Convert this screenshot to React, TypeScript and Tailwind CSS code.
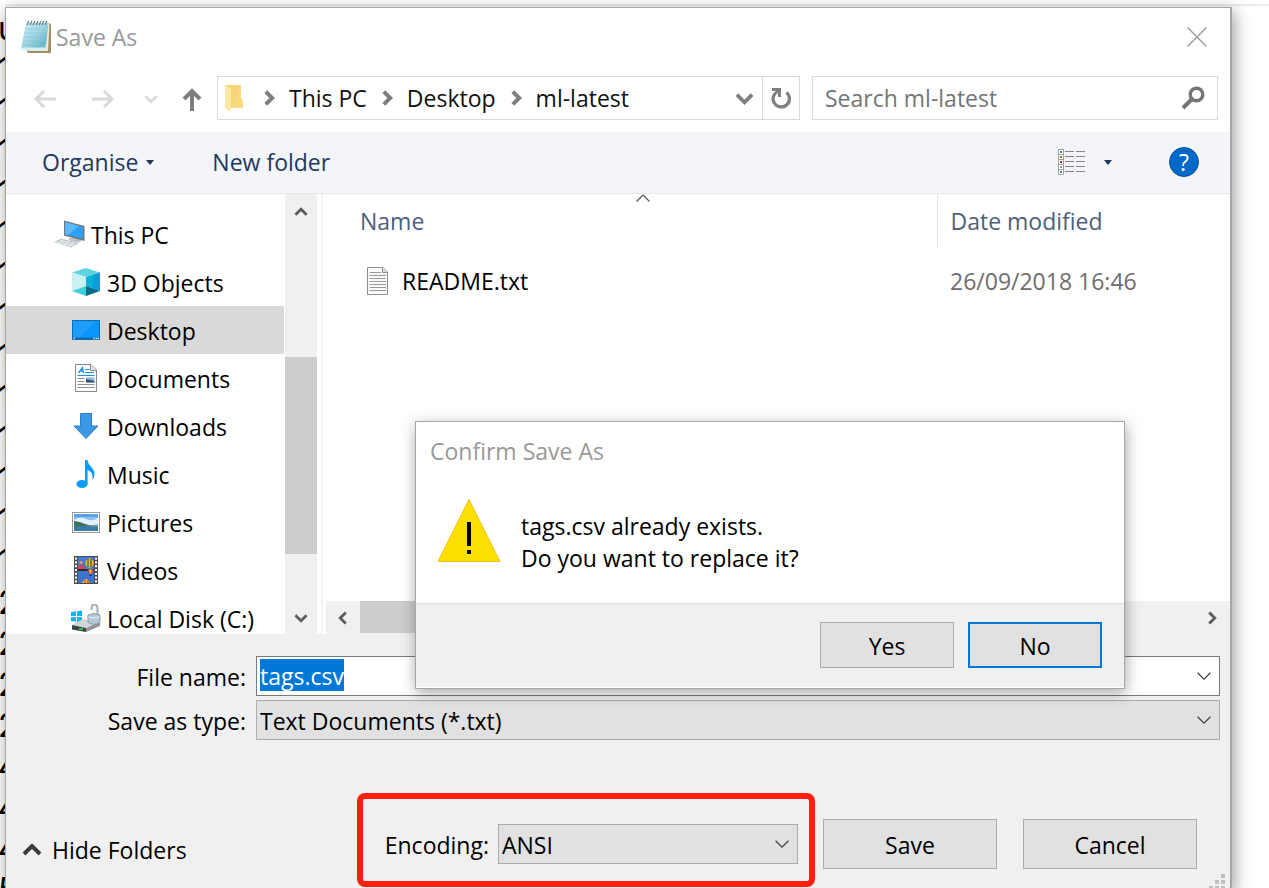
import type { ReactNode } from 'react';

const BEHIND = ['u', '1', '1', '1', '1', '1', '1', '1', '1', '1', '1', '1', '1', '1', '2', '2', '2', '2', '4', '4', '4', '5'];

type ChevronProps = { dir: 'up' | 'down' | 'left' | 'right'; className: string; stroke?: number };

function Chevron({ dir, className, stroke = 2 }: ChevronProps) {
  const paths = {
    up: 'M2 14 L10 6 L18 14',
    down: 'M2 6 L10 14 L18 6',
    left: 'M14 2 L6 10 L14 18',
    right: 'M6 2 L14 10 L6 18',
  };
  return (
    <svg viewBox="0 0 20 20" className={className} fill="none" stroke="currentColor" strokeWidth={stroke} aria-hidden="true">
      <path d={paths[dir]} />
    </svg>
  );
}

function NotepadIcon() {
  return (
    <svg viewBox="0 0 32 34" className="h-[34px] w-8 shrink-0" aria-hidden="true">
      <defs>
        <linearGradient id="pad" x1="0" y1="0" x2="1" y2="1">
          <stop offset="0" stopColor="#c9edf3" />
          <stop offset="0.45" stopColor="#a3d9e5" />
          <stop offset="0.8" stopColor="#68b6ca" />
          <stop offset="1" stopColor="#b9e4ec" />
        </linearGradient>
      </defs>
      <path d="M7 31 L8 33 H31 V4 L28 3 Z" fill="#a08f66" />
      <path d="M8 31 H28 L29.5 4 L27 3 Z" fill="#f2ead4" />
      <path d="M6 3 H28.5 L25.5 30 H0.5 Z" fill="url(#pad)" />
      <path d="M0.5 30 L1 27.5 H25.8 L25.5 30 Z" fill="#d5f1f5" />
      <path d="M5.5 9 H25 M5 13 H24.5 M4.3 17 H24 M3.5 21 H23.5 M3 25 H23" stroke="#8ac6d4" strokeWidth="0.7" />
      <path d="M7 5 L9 1 M10 5 L12 1 M13 5 L15 1 M16 5 L18 1 M19 5 L21 1 M22 5 L24 1 M25 5 L27 1" stroke="#6d7f86" strokeWidth="1.3" />
    </svg>
  );
}

function FolderIcon() {
  return (
    <svg viewBox="0 0 20 28" className="h-7 w-5 shrink-0" aria-hidden="true">
      <path d="M0 1 H16 V14 L18 17 V24 H5 Z" fill="#f5d576" />
      <path d="M8 24 L16 1 V14 L18 17 V24 Z" fill="#f9da7e" />
      <path d="M0 1 L6 5 V24 L5 27.500 L0 24 Z" fill="#ffe9a2" />
    </svg>
  );
}

function ComputerIcon() {
  return (
    <svg viewBox="0 0 32 28" className="h-7 w-8 shrink-0" aria-hidden="true">
      <path d="M14 19 L20 16.500 L28 20 L25 22.500 L17 21 Z" fill="#b9bfc5" />
      <path d="M10 0.500 L30.500 6 V21 L10 15.500 Z" fill="#6e7479" />
      <path d="M11 2 L29 7 V19 L11 14.300 Z" fill="#2f9ff5" />
      <path d="M11 2 L25 6 L14 15 L11 14.300 Z" fill="#5cb8fb" />
      <path d="M0 22 L7 18.500 L25 23 L17 27.500 Z" fill="#c3c8cd" />
      <path d="M3 22 L19 26 M6 20.500 L21 24.500 M5 24 L10 19.500 M10 25 L15 21 M14 26.500 L20 22.300" stroke="#eef0f2" strokeWidth="0.9" />
    </svg>
  );
}

function CubeIcon() {
  return (
    <svg viewBox="0 0 28 28" className="size-7 shrink-0" aria-hidden="true">
      <path d="M14 0 L28 4.500 L14 9 L0 4.500 Z" fill="#5fd3e0" />
      <path d="M0 4.500 L14 9 V18 L0 23 Z" fill="#c9f1f2" />
      <path d="M14 9 L28 4.500 V23 L14 18 Z" fill="#06b3d4" />
      <path d="M22 6.500 L28 4.500 V23 L21 20.500 Z" fill="#0a9fdc" />
      <path d="M14 18 L28 23 L14 28 Z" fill="#086a86" />
      <path d="M14 18 L0 23 L14 28 Z" fill="#3fcfd9" />
    </svg>
  );
}

function DesktopIcon() {
  return (
    <svg viewBox="0 0 28 20" className="h-5 w-7 shrink-0" aria-hidden="true">
      <rect x="0.5" y="0.5" width="27" height="19" fill="#1e9cfa" stroke="#0b6bb5" />
      <path d="M27 1 V18 H7 L24 1 Z" fill="#0a96fa" />
      <rect x="1" y="17.500" width="26" height="1.800" fill="#0d69ae" />
      <path d="M1.500 18.500 h1.300 M21.500 18.500 h1.200 M23.700 18.500 h1.200 M25.700 18.500 h1.200" stroke="#fff" strokeWidth="1.400" />
    </svg>
  );
}

function DocumentIcon() {
  return (
    <svg viewBox="0 0 22 28" className="h-7 w-[22px] shrink-0" aria-hidden="true">
      <path d="M0.500 0.500 H16 L21.500 6 V27.500 H0.500 Z" fill="#fbfbfb" stroke="#8a8a8a" />
      <path d="M15.500 0.500 V6.500 H21.500" fill="#e5e5e5" stroke="#8a8a8a" />
      <path d="M3.500 9 L7.500 3.500 L8.500 9 M5 7 H8.500" stroke="#1b8fdc" strokeWidth="1.300" fill="none" />
      <path d="M10 5.500 H14.500 M10 8.500 H19 M2.500 11.500 H19.500" stroke="#1b8fdc" strokeWidth="1.200" />
      <path d="M2.500 14.500 H9.500 M2.500 17.500 H9.500 M2.500 20.500 H19.500 M2.500 23.500 H19.500" stroke="#8f8f8f" />
      <rect x="11" y="13.500" width="8.500" height="5" fill="#8db8e8" />
      <path d="M11 15 L15 16 L19.500 17 V18.500 H11 Z" fill="#35506a" />
    </svg>
  );
}

function TextFileIcon() {
  return (
    <svg viewBox="0 0 22 28" className="h-7 w-[22px] shrink-0" aria-hidden="true">
      <path d="M0.500 0.500 H16 L20.500 5 V27.500 H0.500 Z" fill="#fafafa" stroke="#8f8f8f" />
      <path d="M15.500 0.500 V5.500 H20.500" fill="#dcdcdc" stroke="#8f8f8f" />
      <path d="M2.500 5.500 H14 M2.500 8.500 H19 M2.500 11.500 H19 M2.500 14.500 H19 M2.500 17.500 H19 M2.500 20.500 H19 M2.500 23.500 H19" stroke="#9a9a9a" />
    </svg>
  );
}

function DownloadIcon() {
  return (
    <svg viewBox="0 0 26 26" className="size-[26px] shrink-0" aria-hidden="true">
      <path d="M7.500 0.500 H18.500 V13 H25 L13 25.500 L1 13 H7.500 Z" fill="#3b97e4" stroke="#2b7fc6" />
    </svg>
  );
}

function MusicIcon() {
  return (
    <svg viewBox="0 0 20 28" className="h-7 w-5 shrink-0" aria-hidden="true">
      <ellipse cx="6" cy="24" rx="5.600" ry="4" fill="#0c9bf5" />
      <path d="M9 0 H11.500 C12 6 19 8 18.500 14.500 C18.300 17 17.500 18.500 16 20 C18 14 14.500 11 11.600 10 V24 H9 Z" fill="#0c9bf5" />
    </svg>
  );
}

function PictureIcon() {
  return (
    <svg viewBox="0 0 28 21" className="h-[21px] w-7 shrink-0" aria-hidden="true">
      <rect x="0.500" y="0.500" width="27" height="20" fill="#fff" stroke="#9b9b9b" />
      <rect x="2" y="2" width="24" height="17" fill="#8cc0f0" />
      <rect x="2" y="2" width="24" height="3" fill="#5aa0ea" />
      <path d="M2 8 Q8 4 14 7 T26 6 V13 H2 Z" fill="#e3f1fb" />
      <path d="M2 9 C8 9 13 13 22 14 L10 16 H2 Z" fill="#3f7157" />
      <path d="M2 15 Q12 12.500 26 14 V19 H2 Z" fill="#3b7ba6" />
      <path d="M12 14 L26 12.500 V15 Z" fill="#6f9c8e" />
    </svg>
  );
}

function VideoIcon() {
  return (
    <svg viewBox="0 0 24 28" className="h-7 w-6 shrink-0" aria-hidden="true">
      <rect width="24" height="28" fill="#4c4c4c" />
      <path d="M2 1.500 V28 M22 1.500 V28" stroke="#f1f1f1" strokeWidth="2" strokeDasharray="2.200 1.600" />
      <rect x="4" y="1" width="16" height="12" fill="#3f7bd9" />
      <rect x="4" y="15" width="16" height="12" fill="#3c74d2" />
      <path d="M4 13 V10 L8 8 L12 13 Z" fill="#d04a52" />
      <circle cx="7" cy="6.500" r="1.600" fill="#e8a33b" />
      <ellipse cx="15.500" cy="7" rx="4" ry="4.500" fill="#f4c72a" />
      <path d="M14 3 V11 M17 3 V11" stroke="#3b2a1a" />
      <path d="M4 14 H20" stroke="#1f1f1f" strokeWidth="1.500" />
      <path d="M13 13.500 H20 L17.500 18 H15.500 Z" fill="#d9332e" />
      <path d="M15 13.500 H18 L17 18 H16 Z" fill="#f4c72a" />
      <rect x="15.500" y="18.500" width="2" height="1.500" fill="#2b2b2b" />
      <path d="M8 27 Q12 19 16 27 Z" fill="#f4c72a" />
      <path d="M11 27 V23.500 M14 27 V24" stroke="#d9332e" strokeWidth="1.200" />
    </svg>
  );
}

function DriveIcon() {
  return (
    <svg viewBox="0 0 30 28" className="h-7 w-[30px] shrink-0" aria-hidden="true">
      <path d="M0 8 L5 7.300 V12 H0 Z M6 7.200 L11 6.500 V12 H6 Z M0 13 H5 V17.800 L0 17 Z M6 13 H11 V18.600 L6 17.900 Z" fill="#12b5ee" />
      <path d="M1 21 L12 15 L29 18 L15 24 Z" fill="#d2d5d8" />
      <path d="M1 21 L15 24 V28 L1 25.500 Z" fill="#3c4044" />
      <path d="M15 24 L29 18 V22 L15 28 Z" fill="#8e9499" />
      <rect x="8" y="24" width="4" height="2" fill="#2fbf4a" />
      <path d="M20.500 6 V4 C20.500 -0.500 26.500 -0.500 26.500 4 V11" fill="none" stroke="#a9aeb3" strokeWidth="2" />
      <path d="M17 11 L23 9.500 L29 11 V18.500 L23 20.500 L17 18.500 Z" fill="#b4c9d6" stroke="#8d9aa3" />
      <path d="M17.500 13 L23 14 L28.500 13" fill="none" stroke="#e7eff4" />
    </svg>
  );
}

function Crumb({ children }: { children: ReactNode }) {
  return (
    <li className="flex items-center">
      <span className="flex w-10 justify-center text-[#7f7f7f]">
        <Chevron dir="right" className="size-4" stroke={5} />
      </span>
      <a href="#" className="text-[#111]">{children}</a>
    </li>
  );
}

const PLACES: { label: string; icon: ReactNode; root?: boolean; selected?: boolean }[] = [
  { label: 'This PC', icon: <ComputerIcon />, root: true },
  { label: '3D Objects', icon: <CubeIcon /> },
  { label: 'Desktop', icon: <DesktopIcon />, selected: true },
  { label: 'Documents', icon: <DocumentIcon /> },
  { label: 'Downloads', icon: <DownloadIcon /> },
  { label: 'Music', icon: <MusicIcon /> },
  { label: 'Pictures', icon: <PictureIcon /> },
  { label: 'Videos', icon: <VideoIcon /> },
  { label: 'Local Disk (C:)', icon: <DriveIcon /> },
];

function Sidebar() {
  return (
    <nav aria-label="Folders" className="flex w-[312px] shrink-0 overflow-hidden">
      <ul className="w-[278px] shrink-0 pt-4">
        {PLACES.map((p) => (
          <li key={p.label} className={p.selected ? 'bg-[#d9d9d9]' : ''}>
            <a href="#" className={`flex h-12 items-center text-black ${p.root ? 'pl-12' : 'pl-16'}`}>
              <span className={`flex ${p.root ? 'w-[37px]' : 'w-8 justify-center'}`}>{p.icon}</span>
              <span className={`pt-[2px] ${p.root ? '' : 'pl-[5px]'}`}>{p.label}</span>
            </a>
          </li>
        ))}
      </ul>
      <div className="ml-px flex w-8 flex-col items-center bg-[#f0f0f0] text-[#5c5c5c]">
        <button aria-label="Scroll up" className="flex h-9 w-full items-center justify-center">
          <Chevron dir="up" className="size-[14px]" stroke={4} />
        </button>
        <div className="flex w-full flex-1 flex-col">
          <div className="basis-[127px]" />
          <div className="basis-[197px] bg-[#cdcdcd]" />
        </div>
        <button aria-label="Scroll down" className="flex h-8 w-full items-center justify-center">
          <Chevron dir="down" className="size-[14px]" stroke={4} />
        </button>
      </div>
    </nav>
  );
}

function FileList() {
  return (
    <div className="ml-[3px] flex min-w-0 flex-1 flex-col border-l-2 border-[#f5f5f5]">
      <table className="w-full table-fixed text-left">
        <colgroup>
          <col />
          <col className="w-[293px]" />
        </colgroup>
        <thead>
          <tr className="h-[53px] text-[#4c607a]">
            <th className="p-0 font-normal">
              <div className="grid h-[53px] items-center pl-[26px]">
                <span className="col-start-1 row-start-1 pl-[11px]">Name</span>
                <svg viewBox="0 0 14 8" className="col-start-1 row-start-1 h-2 w-[14px] self-start justify-self-center" fill="none" stroke="#555" strokeWidth="1.200" aria-hidden="true">
                  <path d="M0.500 7.500 L7 1 L13.500 7.500" />
                </svg>
              </div>
            </th>
            <th className="border-l border-[#e5e5e5] p-0 pl-[13px] font-normal">Date modified</th>
          </tr>
        </thead>
        <tbody>
          <tr className="h-[68px]">
            <td className="p-0">
              <span className="flex items-center gap-[13px] pl-11">
                <TextFileIcon />
                README.txt
              </span>
            </td>
            <td className="p-0 pl-[13px] text-[#6d6d6d]">26/09/2018 16:46</td>
          </tr>
        </tbody>
      </table>
      <div className="mt-auto ml-[3px] flex h-[33px] bg-[#f0f0f0] text-[#5c5c5c]">
        <button aria-label="Scroll left" className="flex w-[34px] items-center justify-center">
          <Chevron dir="left" className="size-[14px]" stroke={4} />
        </button>
        <div className="mr-32 mb-px flex-1 bg-[#cdcdcd]" />
        <button aria-label="Scroll right" className="flex w-9 items-center justify-center">
          <Chevron dir="right" className="size-[14px]" stroke={4} />
        </button>
      </div>
    </div>
  );
}

function Select({ id, value, className }: { id: string; value: string; className: string }) {
  return (
    <div className={`grid h-10 items-center ${className}`}>
      <select id={id} className="col-start-1 row-start-1 h-10 w-full appearance-none border border-[#adadad] bg-[#e1e1e1] pt-[2px] pl-[3px] text-black">
        <option>{value}</option>
      </select>
      <Chevron dir="down" className="pointer-events-none col-start-1 row-start-1 mr-2 size-4 justify-self-end text-[#444]" stroke={1.6} />
    </div>
  );
}

function ConfirmDialog() {
  return (
    <section
      role="dialog"
      aria-labelledby="confirm-title"
      className="absolute top-[413px] right-[105px] w-[710px] border border-[#a6a6a6] bg-white shadow-[1px_4px_14px_rgba(0,0,0,0.35)]"
    >
      <h2 id="confirm-title" className="px-[14px] pt-[13px] leading-8 text-[#999]">Confirm Save As</h2>
      <div className="flex px-[21px] pt-[31px] pb-[29px]">
        <svg viewBox="0 0 64 64" className="size-16 shrink-0" aria-hidden="true">
          <path d="M32 1.500 L63 63.500 H1 Z" fill="#fce100" stroke="#fbbc1a" />
          <rect x="30" y="24" width="4" height="24" />
          <rect x="30" y="52" width="4" height="4" />
        </svg>
        <p className="pt-3 pl-5 leading-8 text-black">
          tags.csv already exists.
          <br />
          Do you want to replace it?
        </p>
      </div>
      <div className="mb-px flex justify-end gap-[14px] border-t border-[#dfdfdf] bg-[#f0f0f0] px-[22px] pt-[18px] pb-[19px]">
        <button className="h-[46px] w-[134px] border border-[#adadad] bg-[#e1e1e1] pt-[2px] text-black">Yes</button>
        <button className="h-[46px] w-[134px] border-2 border-[#0078d7] bg-[#e1e1e1] pt-[2px] text-black">No</button>
      </div>
    </section>
  );
}

export default function App() {
  return (
    <div className="flex h-screen overflow-hidden bg-white font-['Open_Sans',sans-serif] text-[23px] leading-8">
      <div aria-hidden="true" className="flex w-[5px] shrink-0 flex-col overflow-hidden pt-2 font-['Inter',sans-serif] text-[32px] leading-[41px] text-black">
        {BEHIND.map((c, i) => (
          <span key={i} className="-ml-[2px]">{c}</span>
        ))}
      </div>
      <div className="flex min-w-0 flex-1 flex-col">
        <div className="h-[6px] shrink-0 border-b-2 border-[#ececec] bg-white" />
        <main className="relative mt-px mr-[37px] flex flex-1 flex-col border-t border-r-2 border-l border-[#a6a6a6] bg-white shadow-[2px_4px_16px_rgba(0,0,0,0.4)]">
          <header className="flex h-[60px] items-center pb-[3px] pl-[14px]">
            <NotepadIcon />
            <h1 className="pl-1 text-[#999]">Save As</h1>
            <button aria-label="Close" className="mr-[23px] ml-auto">
              <svg viewBox="0 0 20 20" className="size-5" stroke="#999" strokeWidth="1.400" aria-hidden="true">
                <path d="M0.500 0.500 L19.500 19.500 M19.500 0.500 L0.500 19.500" />
              </svg>
            </button>
          </header>

          <div className="flex h-16 items-start pt-2 pr-3 pl-4">
            <div className="flex h-11 shrink-0 items-center pt-[2px] text-[#d9d9d9]">
              <button aria-label="Back" className="flex w-[46px] justify-center">
                <svg viewBox="0 0 24 20" className="h-5 w-6" fill="none" stroke="currentColor" strokeWidth="3" aria-hidden="true">
                  <path d="M23 10 H3 M11 2 L3 10 L11 18" />
                </svg>
              </button>
              <button aria-label="Forward" className="flex w-[70px] justify-center">
                <svg viewBox="0 0 24 20" className="h-5 w-6" fill="none" stroke="currentColor" strokeWidth="3" aria-hidden="true">
                  <path d="M1 10 H21 M13 2 L21 10 L13 18" />
                </svg>
              </button>
              <button aria-label="Recent locations" className="flex w-[26px] justify-center">
                <Chevron dir="down" className="size-[14px]" stroke={4} />
              </button>
              <button aria-label="Up" className="flex w-[53px] justify-center pl-[2px] text-[#7f7f7f]">
                <svg viewBox="0 0 20 24" className="h-6 w-5" fill="none" stroke="currentColor" strokeWidth="4" aria-hidden="true">
                  <path d="M10 24 V4 M2 12 L10 4 L18 12" />
                </svg>
              </button>
            </div>
            <div className="flex h-11 min-w-0 flex-[581] basis-0 items-stretch border border-[#d9d9d9]">
              <div className="flex flex-1 items-center pl-[7px]">
                <FolderIcon />
                <ol className="flex items-center pl-1">
                  <Crumb>This PC</Crumb>
                  <Crumb>Desktop</Crumb>
                  <Crumb>ml-latest</Crumb>
                </ol>
              </div>
              <button aria-label="Previous locations" className="flex w-9 items-center justify-center text-[#7f7f7f]">
                <Chevron dir="down" className="size-[19px]" stroke={4} />
              </button>
              <button aria-label="Refresh" className="flex w-[37px] items-center justify-center border-l border-[#d9d9d9]">
                <svg viewBox="0 0 20 22" className="h-[22px] w-5" fill="none" stroke="#7f7f7f" strokeWidth="3.300" aria-hidden="true">
                  <path d="M15.500 5.500 A8.200 8.200 0 1 1 4 6.500" />
                  <path d="M1 1 H10 V10 H7 V6 L4 8 L2.500 6.500 L4.500 4 H1 Z" fill="#7f7f7f" stroke="none" />
                </svg>
              </button>
            </div>
            <div className="ml-3 flex h-11 min-w-0 flex-[380] basis-0 items-center border border-[#d9d9d9] pr-3 pl-3">
              <input aria-label="Search ml-latest" placeholder="Search ml-latest" className="min-w-0 flex-1 placeholder:text-[#757575] placeholder:opacity-100" />
              <svg viewBox="0 0 24 24" className="size-6" fill="none" stroke="#757575" aria-hidden="true">
                <circle cx="15.500" cy="8.500" r="6.300" strokeWidth="3.400" />
                <path d="M11 13 L2 22" strokeWidth="4" />
              </svg>
            </div>
          </div>

          <div className="flex h-[62px] shrink-0 items-center border-b border-[#e5e7ea] bg-[#f4f5f8] pr-[31px] pb-px pl-9 text-[#1e395b]">
            <button className="flex items-center gap-2">
              Organise
              <svg viewBox="0 0 8 5" className="h-[5px] w-2" fill="currentColor" aria-hidden="true"><path d="M0 0 H8 L4 5 Z" /></svg>
            </button>
            <button className="ml-[58px]">New folder</button>
            <button aria-label="Change your view" className="ml-auto flex items-center gap-[19px]">
              <svg viewBox="0 0 27 26" className="h-[26px] w-[27px]" aria-hidden="true">
                <path d="M0.500 0.500 H5.500 V25.500 H0.500 Z M0.500 5.500 H5.500 M0.500 10.500 H5.500 M0.500 15.500 H5.500 M0.500 20.500 H5.500" fill="#fff" stroke="#a0a0a0" />
                <path d="M7 2.500 H16 M18 2.500 H27 M7 7.500 H16 M18 7.500 H27 M7 12.500 H16 M18 12.500 H27 M7 17.500 H16 M18 17.500 H27 M7 22.500 H16 M18 22.500 H27" stroke="#858585" />
                <rect x="2" y="2" width="2" height="2" fill="#3b7f9e" />
                <rect x="2" y="7" width="2" height="2" fill="#7f7a2b" />
                <rect x="2" y="12" width="2" height="2" fill="#b3302a" />
                <rect x="2" y="17" width="2" height="2" fill="#8a9cb5" />
                <rect x="2" y="22" width="2" height="2" fill="#3b7f9e" />
              </svg>
              <svg viewBox="0 0 8 5" className="h-[5px] w-2" fill="currentColor" aria-hidden="true"><path d="M0 0 H8 L4 5 Z" /></svg>
            </button>
            <button aria-label="Help" className="ml-[57px] flex size-[30px] items-center justify-center rounded-full border border-[#0a4c94] bg-[#0068c8] text-white">
              ?
            </button>
          </div>

          <div className="flex h-[440px] shrink-0">
            <Sidebar />
            <FileList />
          </div>

          <form className="flex flex-1 flex-col bg-[#f0f0f0]" onSubmit={(e) => e.preventDefault()}>
            <div className="grid grid-cols-[240px_1fr] gap-x-[10px] gap-y-1 pt-[22px] pr-[10px] text-black">
              <label htmlFor="file-name" className="self-center pt-[2px] text-right">File name:</label>
              <div className="flex h-10 items-start border border-[#7a7a7a] bg-white pt-[2px] pl-[3px]">
                <input id="file-name" defaultValue="tags.csv" className="field-sizing-content h-8 bg-[#0078d7] pt-[2px] text-white" />
                <button type="button" aria-label="Show file names" className="mt-[9px] mr-[7px] ml-auto text-[#444]">
                  <Chevron dir="down" className="size-4" stroke={1.6} />
                </button>
              </div>
              <label htmlFor="file-type" className="self-center pt-[2px] text-right">Save as type:</label>
              <Select id="file-type" value="Text Documents (*.txt)" className="w-full" />
            </div>
            <div className="mt-[53px] flex items-start text-black">
              <button type="button" className="mt-[41px] ml-4 flex items-center gap-[10px]">
                <Chevron dir="up" className="size-5 text-[#3c3c3c]" stroke={4} />
                Hide Folders
              </button>
              <div className="ml-auto flex h-[94px] w-[458px] items-center justify-end rounded-lg border-6 border-[#ff1f10] pt-2 pr-[11px]">
                <label htmlFor="encoding" className="pt-[2px] pr-[9px]">Encoding:</label>
                <Select id="encoding" value="ANSI" className="w-[300px]" />
              </div>
              <button type="submit" className="mt-[26px] ml-2 h-[50px] w-[174px] border border-[#adadad] bg-[#e1e1e1] pt-[2px]">Save</button>
              <button type="button" className="mt-[26px] mr-[33px] ml-[26px] h-[50px] w-[174px] border border-[#adadad] bg-[#e1e1e1] pt-[2px]">Cancel</button>
            </div>
            <svg viewBox="0 0 16 16" className="-mt-[13px] mr-[5px] size-4 shrink-0 self-end" fill="#bfbfbf" aria-hidden="true">
              <path d="M12 0h4v4h-4z M12 6h4v4h-4z M6 6h4v4H6z M12 12h4v4h-4z M6 12h4v4H6z M0 12h4v4H0z" />
            </svg>
          </form>

          <ConfirmDialog />
        </main>
      </div>
    </div>
  );
}
